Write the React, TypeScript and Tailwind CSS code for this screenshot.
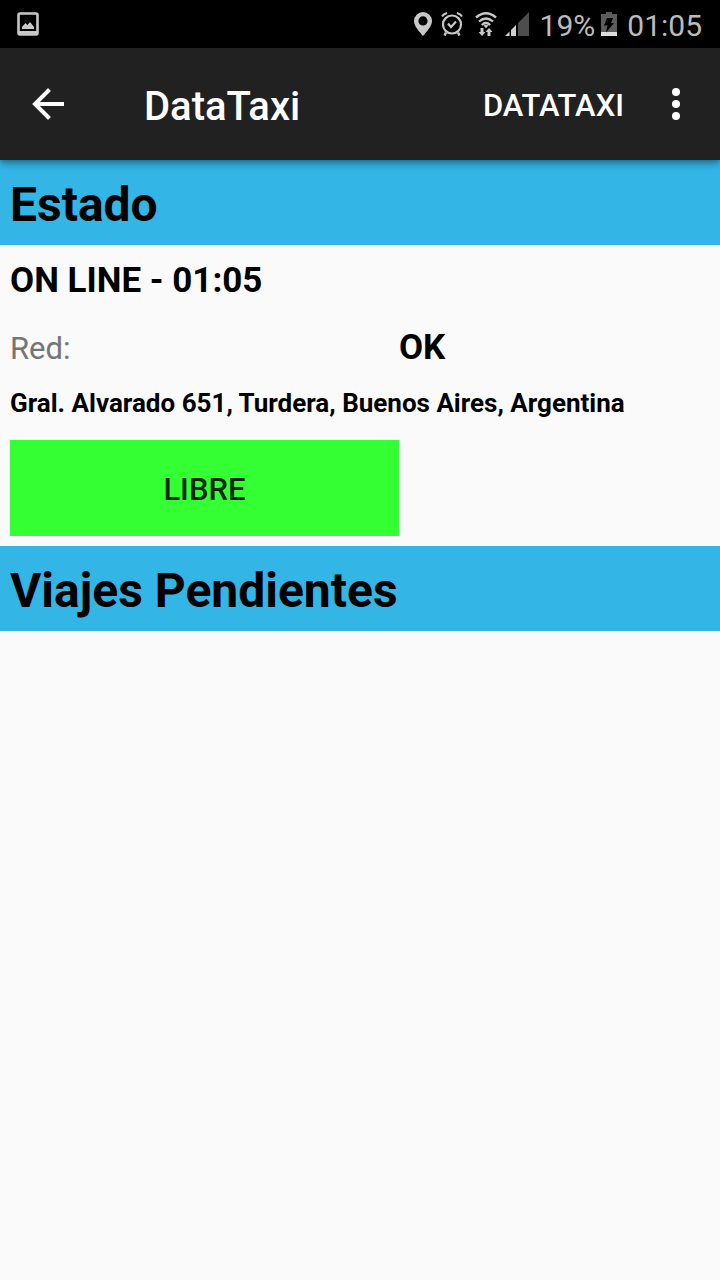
import React from "react";

function PictureIcon() {
  return (
    <svg width="22" height="24" viewBox="0 0 22 24" fill="none" aria-hidden="true">
      <rect x="1.5" y="1.5" width="19" height="21" rx="1.5" stroke="#c8c8c8" strokeWidth="2.600" />
      <rect x="2" y="19" width="18" height="4" fill="#c8c8c8" />
      <path d="M5 17v-2l3.500-4 2 2 2.500-3 4 5v2z" fill="#c8c8c8" />
    </svg>
  );
}

function PinIcon() {
  return (
    <svg width="18" height="24" viewBox="0 0 18 24" aria-hidden="true">
      <path
        fillRule="evenodd"
        fill="#c8c8c8"
        d="M9 0a9 9 0 0 0-9 9c0 5 5 10 9 15 4-5 9-10 9-15a9 9 0 0 0-9-9zm0 4.300a4.600 4.600 0 1 1 0 9.200 4.600 4.600 0 0 1 0-9.200z"
      />
    </svg>
  );
}

function AlarmIcon() {
  return (
    <svg width="22" height="24" viewBox="0 0 22 24" fill="none" stroke="#c8c8c8" aria-hidden="true">
      <circle cx="11" cy="12.500" r="9" strokeWidth="2.200" />
      <path d="M1 4.500Q2.500 2 6 1M21 4.500Q19.500 2 16 1" strokeWidth="2" />
      <path d="M7 11.500l3 3.500 5-5.500" strokeWidth="2.200" />
      <path d="M5 20.500l-1.500 3M17 20.500l1.500 3" strokeWidth="2.400" />
    </svg>
  );
}

function WifiIcon() {
  return (
    <svg width="22" height="24" viewBox="0 0 22 24" fill="none" aria-hidden="true">
      <path d="M1 5.500Q11-3 21 5.500M4 9.500Q11 3.500 18 9.500M6.800 13Q11 9 15.200 13" stroke="#c8c8c8" strokeWidth="2.300" />
      <path d="M8.500 13.500Q11 11.800 13.500 13.500L11 16.200z" fill="#c8c8c8" />
      <path d="M5.500 16h3v4h2L7 24l-3.500-4h2zM12.500 24h3v-4h2L14 16l-3.500 4h2z" fill="#c8c8c8" />
    </svg>
  );
}

function SignalIcon() {
  return (
    <svg width="24" height="24" viewBox="0 0 24 24" aria-hidden="true">
      <path d="M0 24l4.500-4.500V24zM6 24v-6l5-5v11z" fill="#d0d0d0" />
      <path d="M13 24V11L24 0v24z" fill="#4d4d4d" />
    </svg>
  );
}

function BatteryIcon() {
  return (
    <svg width="16" height="24" viewBox="0 0 16 24" aria-hidden="true">
      <path d="M0 2h5V0h6v2h5v22H0z" fill="#5c5c5c" />
      <path d="M0 20h16v4H0z" fill="#dedede" />
      <path d="M6 6h6l-2 5h3L5 20.500l1.500-7H3z" fill="#000" />
    </svg>
  );
}

function StatusBar() {
  return (
    <div className="flex h-12 items-center bg-black pr-[18px] pl-[17px] text-[30px] leading-[44px] text-[#bcbcbc]">
      <PictureIcon />
      <div className="ml-auto flex items-center">
        <PinIcon />
        <span className="ml-[9px]">
          <AlarmIcon />
        </span>
        <span className="ml-3">
          <WifiIcon />
        </span>
        <span className="ml-2">
          <SignalIcon />
        </span>
        <span className="ml-[11px] pt-1">19%</span>
        <span className="ml-[6px]">
          <BatteryIcon />
        </span>
        <time className="ml-[10px] pt-1">01:05</time>
      </div>
    </div>
  );
}

function AppBar() {
  return (
    <header className="relative flex h-28 items-center bg-[#212121] pr-5 pl-6 text-white shadow-[0_2px_8px_rgba(0,0,0,0.5)]">
      <button type="button" aria-label="Volver" className="flex size-12 items-center justify-center">
        <svg width="32" height="32" viewBox="0 0 32 32" fill="none" stroke="#fff" strokeWidth="4" aria-hidden="true">
          <path d="M32 16H3M17.500 1.500L3 16l14.500 14.500" />
        </svg>
      </button>
      <h1 className="ml-[72px] pt-[6px] text-[40px] leading-[48px] font-medium">DataTaxi</h1>
      <button type="button" className="mr-7 ml-auto pt-1 text-[31px] leading-[40px] font-medium">
        DATATAXI
      </button>
      <button type="button" aria-label="Más opciones" className="flex h-12 w-12 items-center justify-center">
        <svg width="8" height="32" viewBox="0 0 8 32" fill="#fff" aria-hidden="true">
          <circle cx="4" cy="4" r="4" />
          <circle cx="4" cy="16" r="4" />
          <circle cx="4" cy="28" r="4" />
        </svg>
      </button>
    </header>
  );
}

function SectionTitle({ children }: { children: React.ReactNode }) {
  return (
    <h2 className="bg-[#33b5e5] px-[10px] pt-[13px] pb-2 text-[48px] leading-[64px] font-bold">{children}</h2>
  );
}

export default function App() {
  return (
    <div className="min-h-screen bg-[#fafafa] font-[Roboto,sans-serif] text-black">
      <StatusBar />
      <AppBar />
      <main>
        <SectionTitle>Estado</SectionTitle>
        <div className="p-[10px]">
          <p className="text-[35px] leading-[52px] font-bold">ON LINE - 01:05</p>
          <dl className="mt-[17px] grid grid-cols-[5fr_4fr] items-baseline leading-[48px]">
            <dt className="text-[31px] text-[#757575]">Red:</dt>
            <dd className="text-[35px] font-bold">OK</dd>
          </dl>
          <p className="mt-[11px] text-[26px] leading-[38px] font-bold">
            Gral. Alvarado 651, Turdera, Buenos Aires, Argentina
          </p>
          <div className="mt-[18px] grid grid-cols-[5fr_4fr]">
            <button type="button" className="h-24 bg-[#33ff33] pt-1 text-[31px] font-medium text-black/87">
              LIBRE
            </button>
          </div>
        </div>
        <SectionTitle>Viajes Pendientes</SectionTitle>
      </main>
    </div>
  );
}
